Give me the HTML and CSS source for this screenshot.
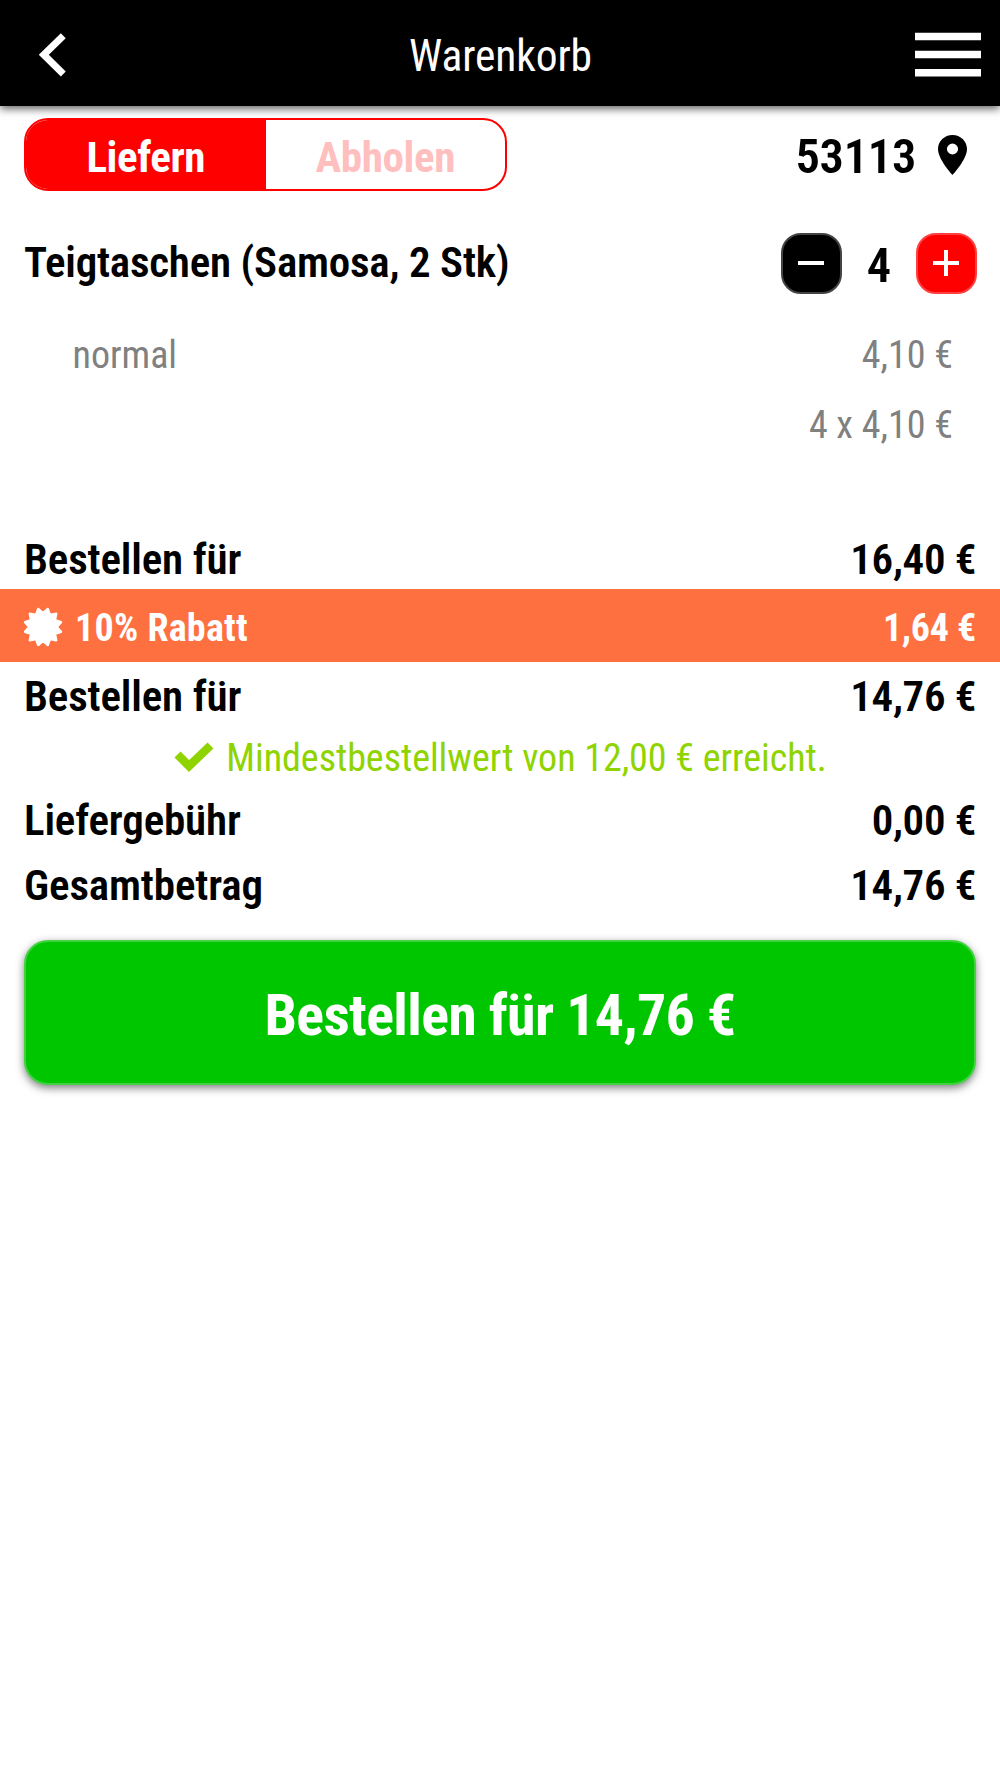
FILE: index.html
```html
<!DOCTYPE html>
<html lang="de">
<head>
<meta charset="utf-8">
<title>Warenkorb</title>
<link rel="stylesheet" href="styles.css">
</head>
<body>
<header class="topbar">
  <svg class="back" viewBox="0 0 28 44"><path d="M24.300 2.800 4.800 21.800l19.500 19.200" fill="none" stroke="#fff" stroke-width="7"/></svg>
  <h1 class="title">Warenkorb</h1>
  <svg class="menu" viewBox="0 0 66 46"><path d="M0 .7h66v7.600H0zM0 18.700h66v7.600H0zM0 37h66v7.600H0z" fill="#fff"/></svg>
</header>
<main>
  <section class="delivery">
    <div class="toggle"><span class="option active">Liefern</span><span class="option">Abholen</span></div>
    <div class="place"><span class="zip">53113</span><svg class="pin" viewBox="5 2 14 20" preserveAspectRatio="none"><path d="M12 2C8.130 2 5 5.130 5 9c0 5.250 7 13 7 13s7-7.750 7-13c0-3.870-3.130-7-7-7zm0 9.700a2.700 2.700 0 1 1 0-5.400 2.700 2.700 0 0 1 0 5.400z"/></svg></div>
  </section>
  <section class="item">
    <h2 class="item-name">Teigtaschen (Samosa, 2 Stk)</h2>
    <div class="stepper">
      <span class="step"><svg viewBox="0 0 26 26"><path d="M0 13h26" stroke="#fff" stroke-width="4"/></svg></span>
      <span class="count">4</span>
      <span class="step plus"><svg viewBox="0 0 26 26"><path d="M0 13h26M13 0v26" stroke="#fff" stroke-width="4"/></svg></span>
    </div>
  </section>
  <div class="detail"><span>normal</span><span>4,10 €</span></div>
  <div class="detail end"><span>4 x 4,10 €</span></div>
  <div class="sum first"><span>Bestellen für</span><span class="price">16,40 €</span></div>
  <div class="discount">
    <svg class="badge" viewBox="-20 -20 40 40"><path fill="#fff" stroke="#fff" stroke-width="2.400" stroke-linejoin="round" d="M4.800 -18L6.900 -12L13.200 -13.200L12 -6.900L18 -4.800L13.800 0L18 4.800L12 6.900L13.200 13.200L6.900 12L4.800 18L0 13.800L-4.800 18L-6.900 12L-13.200 13.200L-12 6.900L-18 4.800L-13.800 0L-18 -4.800L-12 -6.900L-13.200 -13.200L-6.900 -12L-4.800 -18L0 -13.800Z"/></svg>
    <span class="label">10% Rabatt</span><span class="amount">1,64 €</span>
  </div>
  <div class="sum subtotal"><span>Bestellen für</span><span class="price">14,76 €</span></div>
  <div class="minimum"><svg class="check" viewBox="0 0 40 30"><path d="M3.500 12.500 15 24 36.500 3.500" fill="none" stroke="#8fd400" stroke-width="8.500"/></svg><span>Mindestbestellwert von 12,00 € erreicht.</span></div>
  <div class="sum fee"><span>Liefergebühr</span><span class="price">0,00 €</span></div>
  <div class="sum total"><span>Gesamtbetrag</span><span class="price">14,76 €</span></div>
  <button class="order">Bestellen für 14,76 €</button>
</main>
</body>
</html>
```
FILE: styles.css
```css
* { box-sizing: border-box; }
body { margin: 0; min-height: 100vh; background: #fff; color: #000; font-family: "Roboto Condensed", Roboto, sans-serif; font-stretch: 75%; }
svg { display: block; flex: none; }
h1, h2 { margin: 0; }
.topbar { display: flex; align-items: center; justify-content: space-between; height: 106px; padding: 3px 19px 0 39px; background: #000; color: #fff; box-shadow: 0 3px 8px rgba(0,0,0,.6); }
.back { width: 28px; height: 44px; }
.menu { width: 66px; height: 46px; }
.title { font-size: 43.500px; font-weight: 430; line-height: 50px; letter-spacing: -.1px; padding: 5px 0 0; margin-left: 19px; }
.delivery { display: flex; justify-content: space-between; margin: 12px 33px 0 24px; height: 73px; }
.toggle { display: flex; width: 483px; border: 2px solid #f00; border-radius: 24px; overflow: hidden; font-size: 43px; font-weight: 700; letter-spacing: -.4px; }
.option { flex: 1; text-align: center; line-height: 74px; color: #ffbfbf; }
.active { background: #f00; color: #fff; }
.place { display: flex; align-items: center; gap: 22px; font-size: 48.500px; font-weight: 640; letter-spacing: -.3px; }
.zip { padding-top: 3px; }
.pin { width: 29px; height: 40px; margin-top: 1px; }
.item { display: flex; align-items: center; justify-content: space-between; height: 61px; margin: 42px 23px 0 24px; }
.item-name { font-size: 43px; font-weight: 640; line-height: 56px; letter-spacing: -.22px; padding-bottom: 4px; }
.stepper { display: flex; align-items: center; justify-content: space-between; width: 196px; }
.step { display: flex; align-items: center; justify-content: center; width: 61px; height: 61px; border-radius: 20px; background: #000; border: 2px solid #444; }
.step svg { width: 26px; height: 26px; margin: -1px 0 0 -1px; }
.plus { background: #f00; border-color: #ff4040; }
.count { font-size: 48.500px; font-weight: 640; line-height: 58px; padding-top: 4px; }
.detail { display: flex; justify-content: space-between; margin: 0 47px 0 72.500px; font-size: 38px; line-height: 70px; color: #808080; }
.item + .detail { margin-top: 26px; }
.end { justify-content: flex-end; }
.sum { display: flex; justify-content: space-between; padding: 0 24px; font-size: 43px; font-weight: 640; line-height: 60px; letter-spacing: -.15px; }
.price { letter-spacing: -.35px; }
.first { margin-top: 69px; }
.discount { display: flex; align-items: center; height: 73px; padding: 2px 24px 0; background: #ff7040; color: #fff; font-size: 38px; font-weight: 700; line-height: 70px; }
.badge { width: 40px; height: 40px; margin: 0 12px 0 -1px; }
.label { letter-spacing: .25px; }
.amount { margin-left: auto; letter-spacing: -.3px; }
.discount span { padding-top: 2px; }
.subtotal { margin-top: 4px; }
.minimum { display: flex; align-items: center; justify-content: center; gap: 12px; height: 60px; margin-top: 2px; color: #8fd400; font-size: 38px; letter-spacing: -.03px; }
.check { width: 40px; height: 30px; margin: -3px 0 0 1px; }
.fee { margin-top: 2px; }
.total { margin-top: 5px; }
.order { display: block; width: 952px; height: 145px; margin: 25px 0 0 24px; padding: 5px 0 0; border: 2px solid #40d340; border-radius: 24px; background: #00c600; color: #fff; font: 700 58px "Roboto Condensed", Roboto, sans-serif; font-stretch: 75%; letter-spacing: -.68px; box-shadow: 0 3px 8px rgba(0,0,0,.5); }
```
